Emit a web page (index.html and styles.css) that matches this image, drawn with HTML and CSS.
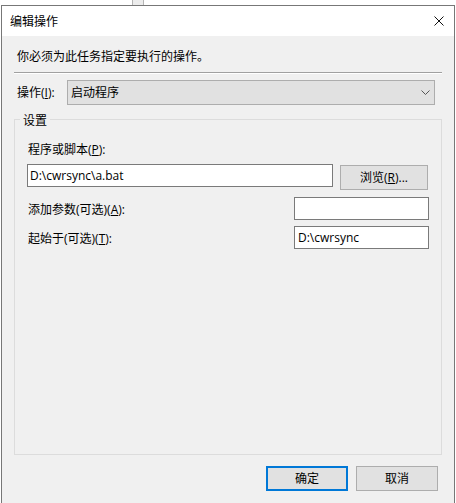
FILE: index.html
```html
<!DOCTYPE html>
<html lang="zh-CN">
<head>
<meta charset="utf-8">
<title>编辑操作</title>
<link rel="stylesheet" href="styles.css">
</head>
<body>
<div class="desk"><div class="desk-strip"></div></div>
<div class="window">
  <div class="titlebar">
    <span class="title">编辑操作</span>
    <svg class="close" viewBox="0 0 10 10" width="10" height="10"><path d="M0.5 0.5 L9.5 9.5 M9.5 0.5 L0.5 9.5" stroke="#111" stroke-width="1" fill="none"/></svg>
  </div>
  <div class="body">
    <p class="desc">你必须为此任务指定要执行的操作。</p>
    <div class="sep"></div>
    <div class="action-row">
      <span class="label">操作(<u>I</u>):</span>
      <div class="combo"><span>启动程序</span><svg class="chev" viewBox="0 0 9 5" width="9" height="5"><path d="M0.5 0.5 L4.5 4.5 L8.5 0.5" stroke="#555" stroke-width="1" fill="none"/></svg></div>
    </div>
    <div class="group">
      <span class="legend">设置</span>
      <div class="glabel">程序或脚本(<u>P</u>):</div>
      <div class="prog-row">
        <div class="input wide">D:\cwrsync\a.bat</div>
        <button class="btn browse">浏览(<u>R</u>)...</button>
      </div>
      <div class="opt-row">
        <span class="label">添加参数(可选)(<u>A</u>):</span>
        <div class="input short"></div>
      </div>
      <div class="opt-row">
        <span class="label">起始于(可选)(<u>T</u>):</span>
        <div class="input short">D:\cwrsync</div>
      </div>
    </div>
    <div class="buttons">
      <button class="btn ok">确定</button>
      <button class="btn">取消</button>
    </div>
  </div>
</div>
</body>
</html>
```
FILE: styles.css
```css
* { box-sizing: border-box; }
html, body { margin: 0; padding: 0; background: #fff; }
body {
  width: 456px;
  height: 503px;
  overflow: hidden;
  font-family: "Open Sans", "Noto Sans CJK SC", sans-serif;
  font-size: 12px;
  line-height: 16px;
  color: #000;
}
.btn {
  font-family: inherit;
  font-size: 12px;
  height: 25px;
  width: 82px;
  padding: 0;
  margin: 0;
  background: #e1e1e1;
  border: 1px solid #adadad;
  color: #000;
  line-height: 23px;
}
.desk { height: 5px; display: flex; }
.desk-strip {
  margin-left: 132px;
  width: 12px;
  height: 5px;
  background: #ececec;
  border-left: 1px solid #b5b5b5;
  border-right: 1px solid #b5b5b5;
}
.window {
  margin-left: 1px;
  width: 454px;
  height: 498px;
  border: 1px solid #777;
  border-bottom: 0;
  display: flex;
  flex-direction: column;
}
.titlebar {
  height: 30px;
  flex: none;
  background: #fff;
  display: flex;
  align-items: center;
  justify-content: space-between;
  padding: 0 10px 0 8px;
}
.title { padding-top: 1px; }
.close { display: block; }
.body { flex: 1; background: #f0f0f0; }
.desc { margin: 0; padding: 13px 0 0 15px; }
.sep {
  margin: 7px 12px 0 12px;
  height: 2px;
  border-top: 1px solid #a0a0a0;
  border-bottom: 1px solid #fff;
}
.action-row {
  display: flex;
  align-items: center;
  margin-top: 6px;
  padding: 0 19px 0 15px;
}
.action-row .label { width: 50px; flex: none; padding-top: 1px; }
.combo {
  flex: 1;
  height: 25px;
  background: #e1e1e1;
  border: 1px solid #adadad;
  display: flex;
  align-items: center;
  justify-content: space-between;
  padding: 0 4px 0 3px;
}
.chev { display: block; }
.group {
  position: relative;
  margin: 14px 12px 0 12px;
  height: 336px;
  border: 1px solid #dcdcdc;
  padding: 22px 12px 0 12px;
}
.legend {
  position: absolute;
  top: -7px;
  left: 5px;
  padding: 0 3px;
  background: #f0f0f0;
}
.glabel { padding-left: 1px; }
.prog-row {
  display: flex;
  align-items: flex-start;
  margin-top: 6px;
}
.input {
  flex: none;
  background: #fff;
  border: 1px solid #7a7a7a;
  height: 23px;
  line-height: 21px;
  padding-left: 2px;
  white-space: pre;
}
.wide { width: 306px; }
.short { width: 135px; padding-left: 3px; }
.btn.browse {
  flex: none;
  margin: 1px 1px 0 auto;
  width: 88px;
}
.opt-row {
  display: flex;
  align-items: flex-start;
  justify-content: space-between;
  margin-top: 7px;
}
.opt-row + .opt-row { margin-top: 6px; }
.opt-row .label { padding-left: 1px; margin-top: 5px; }
.btn.ok { border: 2px solid #0078d7; line-height: 21px; }
.buttons {
  display: flex;
  justify-content: flex-end;
  gap: 8px;
  margin-top: 11px;
  padding-right: 16px;
}
```
